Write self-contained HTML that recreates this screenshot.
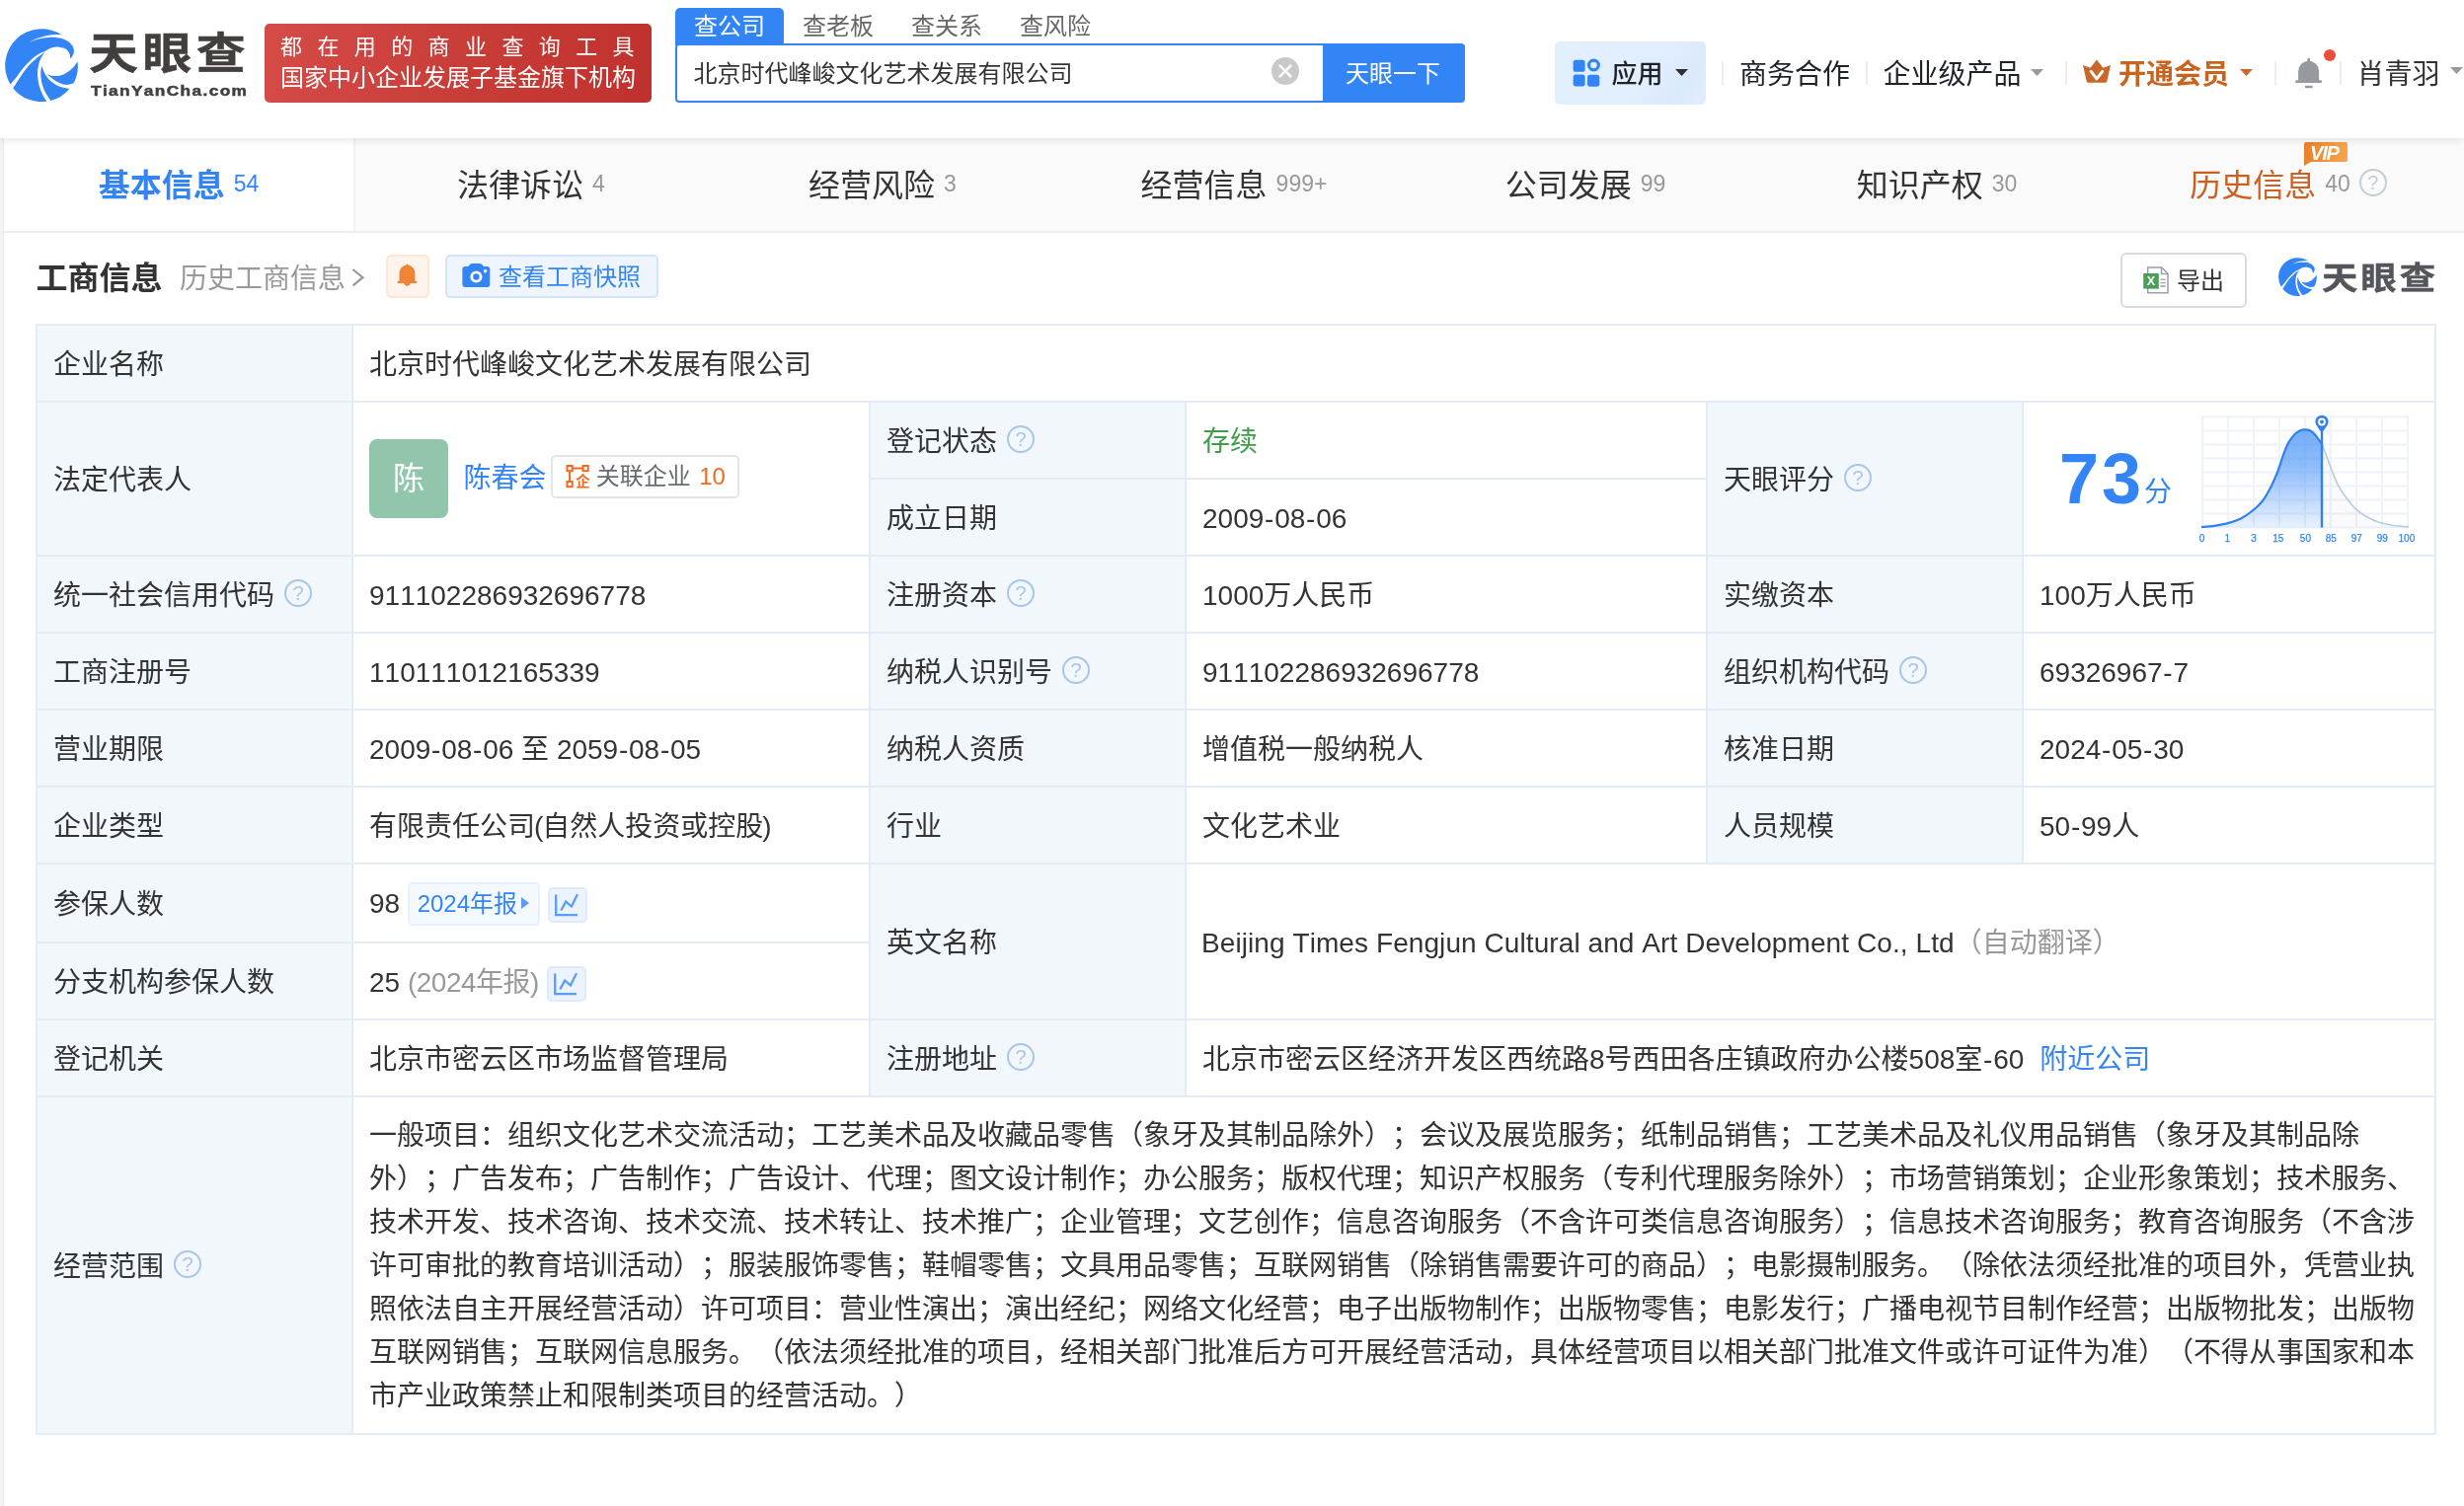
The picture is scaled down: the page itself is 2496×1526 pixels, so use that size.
<!DOCTYPE html><html lang="zh-CN"><head><meta charset="utf-8"><title>天眼查</title><style>
*{box-sizing:border-box;margin:0;padding:0}
html,body{width:2496px;height:1526px;overflow:hidden;background:#fff}
body{font-family:"Liberation Sans","Noto Sans CJK SC",sans-serif;color:#333;position:relative;font-size:28px;text-spacing-trim:space-all;font-kerning:none;-webkit-font-smoothing:antialiased}
#hdr,#tabs,#main{will-change:transform}
.t{position:absolute;white-space:nowrap}
.abs{position:absolute}
#hdr{position:absolute;left:0;top:0;width:2496px;height:140px;background:#fff;z-index:5;box-shadow:0 2px 8px rgba(0,0,0,0.10)}
#tabs{position:absolute;left:0;top:140px;width:2496px;height:96px;background:#fafafa;border-bottom:2px solid #eeeeee}
#gut{position:absolute;left:0;top:140px;width:4px;height:1386px;background:#f3f3f3;border-right:1px solid #e9e9e9}
.tab{position:absolute;top:0;height:94px;width:356px;text-align:center;line-height:97px;font-size:32px;color:#333;white-space:nowrap}
.tab .n{font-size:23px;color:#999;margin-left:9px;position:relative;top:-5px}
.tab.on{background:#fff;color:#3385f6;font-weight:bold;border-right:2px solid #f1f1f1;height:94px}
.tab.on .n{color:#3385f6;font-weight:normal}
.q{display:inline-block;border-radius:50%;text-align:center;font-size:20px;line-height:24px;font-family:"Liberation Sans",sans-serif;vertical-align:middle;font-weight:normal}
.sep{position:absolute;top:62px;width:2px;height:24px;background:#e9eef5}
table{position:absolute;left:36px;top:328px;width:2432px;border-collapse:collapse;table-layout:fixed;font-size:28px;color:#333}
td{border:2px solid #e3ecf5;padding:4px 16px 0;vertical-align:middle;height:78px;line-height:44px;white-space:nowrap;overflow:hidden}
td.l{background:#f2f7fc}
td .q{margin-left:10px;position:relative;top:-4.5px}
.hy{font-style:normal;margin:0 0.78px}
.pl{font-style:normal;margin:0 -1px 0 -1px}.pr{font-style:normal;margin:0 -1px}
.green{color:#3f9d4b}
.gray{color:#999}
.blue{color:#3385f6}
</style></head><body>
<div id="hdr">
<svg style="position:absolute;left:4.9px;top:28.9px" width="74.2" height="74.2" viewBox="80 145 1215 1215" fill="#3385f6" ><path d="M169,1069 A607.5,607.5 0 0 1 1025.0,250.0 C1004.2,248.8 944.2,241.0 900.0,243.0 C855.8,245.0 806.7,251.7 760.0,262.0 C713.3,272.3 666.7,287.0 620.0,305.0 C573.3,323.0 503.3,359.2 480.0,370.0 C506.7,364.7 586.7,331.7 640.0,318.0 C693.3,304.3 748.3,295.7 800.0,292.0 C851.7,288.3 906.7,291.0 950.0,296.0 C993.3,301.0 1026.7,308.8 1060.0,322.0 C1093.3,335.2 1125.8,355.3 1150.0,375.0 C1174.2,394.7 1192.5,415.8 1205.0,440.0 C1217.5,464.2 1225.0,495.0 1225.0,520.0 C1225.0,545.0 1215.0,569.2 1205.0,590.0 C1195.0,610.8 1171.7,635.8 1165.0,645.0 C1163.3,632.5 1162.5,592.5 1155.0,570.0 C1147.5,547.5 1135.8,526.7 1120.0,510.0 C1104.2,493.3 1083.3,479.7 1060.0,470.0 C1036.7,460.3 1006.7,455.0 980.0,452.0 C953.3,449.0 926.7,448.2 900.0,452.0 C873.3,455.8 846.3,463.3 820.0,475.0 C793.7,486.7 755.0,514.2 742.0,522.0 C725.0,529.2 673.7,545.3 640.0,565.0 C606.3,584.7 580.0,604.2 540.0,640.0 C500.0,675.8 445.0,728.3 400.0,780.0 C355.0,831.7 308.5,901.8 270.0,950.0 C231.5,998.2 185.8,1049.2 169.0,1069.0Z"/><path d="M746,532 C721.7,550.0 651.0,595.3 600.0,640.0 C549.0,684.7 490.0,740.0 440.0,800.0 C390.0,860.0 337.5,944.2 300.0,1000.0 C262.5,1055.8 229.2,1112.5 215.0,1135.0 A607.5,607.5 0 0 0 770.0,1353.0 C758.3,1332.5 720.0,1272.2 700.0,1230.0 C680.0,1187.8 662.5,1145.0 650.0,1100.0 C637.5,1055.0 629.7,1000.0 625.0,960.0 C620.3,920.0 619.5,896.7 622.0,860.0 C624.5,823.3 630.3,778.3 640.0,740.0 C649.7,701.7 662.3,664.7 680.0,630.0 C697.7,595.3 735.0,548.3 746.0,532.0Z"/><path d="M692,760 C689.2,775.0 677.3,816.7 675.0,850.0 C672.7,883.3 673.8,921.7 678.0,960.0 C682.2,998.3 688.0,1040.0 700.0,1080.0 C712.0,1120.0 726.7,1156.7 750.0,1200.0 C773.3,1243.3 825.0,1316.7 840.0,1340.0 A607.5,607.5 0 0 0 1150.0,1143.0 C1133.3,1140.0 1083.3,1133.8 1050.0,1125.0 C1016.7,1116.2 981.7,1105.0 950.0,1090.0 C918.3,1075.0 886.7,1055.8 860.0,1035.0 C833.3,1014.2 811.7,992.5 790.0,965.0 C768.3,937.5 746.3,904.2 730.0,870.0 C713.7,835.8 698.3,778.3 692.0,760.0Z"/><path d="M780,900 C790.0,903.7 816.7,916.7 840.0,922.0 C863.3,927.3 893.3,932.0 920.0,932.0 C946.7,932.0 973.3,929.0 1000.0,922.0 C1026.7,915.0 1053.3,904.5 1080.0,890.0 C1106.7,875.5 1135.0,855.0 1160.0,835.0 C1185.0,815.0 1209.2,794.2 1230.0,770.0 C1250.8,745.8 1275.8,703.3 1285.0,690.0 A607.5,607.5 0 0 1 1220.0,1050.0 C1205.0,1054.2 1158.3,1071.7 1130.0,1075.0 C1101.7,1078.3 1078.3,1076.7 1050.0,1070.0 C1021.7,1063.3 988.3,1049.2 960.0,1035.0 C931.7,1020.8 910.0,1007.5 880.0,985.0 C850.0,962.5 796.7,914.2 780.0,900.0Z"/></svg>
<div class="t " style="left:90px;top:27px;line-height:56px;font-size:44px;font-weight:bold;color:#433f3e;-webkit-text-stroke:0.5px #433f3e;transform-origin:0 50%;transform:scaleX(1.135);letter-spacing:3.9px">天眼查</div>
<div class="t " style="left:92px;top:83px;line-height:18px;font-size:15px;font-weight:bold;color:#433f3e;-webkit-text-stroke:0.5px #433f3e;transform-origin:0 50%;transform:scaleX(1.15);letter-spacing:1.2px;font-family:"Liberation Sans",sans-serif">TianYanCha.com</div>
<div class="abs" style="left:268px;top:24px;width:392px;height:80px;border-radius:5px;background:linear-gradient(100deg,#d54b47 0%,#c83c37 55%,#bf312c 100%)"></div>
<div class="t " style="left:284px;top:33px;line-height:30px;font-size:22px;color:#fff;letter-spacing:15.4px">都在用的商业查询工具</div>
<div class="t " style="left:284px;top:64px;line-height:30px;font-size:24px;color:#fff">国家中小企业发展子基金旗下机构</div>
<div class="abs" style="left:684px;top:8px;width:110px;height:38px;border-radius:5px 5px 0 0;background:#3385f6"></div>
<div class="t " style="left:684px;top:9px;line-height:36px;font-size:24px;width:110px;text-align:center;color:#fff">查公司</div>
<div class="t " style="left:794px;top:9px;line-height:36px;font-size:24px;width:110px;text-align:center;color:#666">查老板</div>
<div class="t " style="left:904px;top:9px;line-height:36px;font-size:24px;width:110px;text-align:center;color:#666">查关系</div>
<div class="t " style="left:1014px;top:9px;line-height:36px;font-size:24px;width:110px;text-align:center;color:#666">查风险</div>
<div class="abs" style="left:684px;top:44px;width:660px;height:60px;border:2px solid #3385f6;border-radius:4px 0 0 4px;background:#fff"></div>
<div class="t " style="left:702.5px;top:53px;line-height:44px;font-size:24px;color:#333">北京时代峰峻文化艺术发展有限公司</div>
<svg class="abs" style="left:1288px;top:58px" width="28" height="28" viewBox="0 0 28 28"><circle cx="14" cy="14" r="14" fill="#c9c9c9"/><path d="M8.6,8.6L19.4,19.4M19.4,8.6L8.6,19.4" stroke="#fff" stroke-width="2.6" stroke-linecap="round"/></svg>
<div class="abs" style="left:1340px;top:44px;width:144px;height:60px;border-radius:0 4px 4px 0;background:#3385f6"></div>
<div class="t " style="left:1339px;top:52.5px;line-height:44px;font-size:24px;color:#fff;width:144px;text-align:center">天眼一下</div>
<div class="abs" style="left:1575px;top:42px;width:153px;height:64px;border-radius:5px;background:linear-gradient(125deg,#e2effd 0%,#e1eefd 60%,#dbe9fc 82%,#e2eefd 100%)"></div>
<svg class="abs" style="left:1593px;top:59px" width="29" height="30" viewBox="0 0 29 30" fill="#3385f6"><rect x="0.6" y="1.8" width="12" height="12" rx="2.6"/><rect x="0.6" y="16.4" width="12" height="12" rx="2.6"/><rect x="15" y="16.7" width="12.3" height="12" rx="2.6"/><circle cx="21.4" cy="7" r="4.9" fill="none" stroke="#3385f6" stroke-width="3.2"/></svg>
<div class="t " style="left:1632.5px;top:53px;line-height:44px;font-size:26px;color:#1f2329;font-weight:500">应用</div>
<svg class="abs" style="left:1697px;top:70px" width="13" height="7" viewBox="0 0 13 7"><path d="M0,0H13L6.5,7Z" fill="#2b2e33"/></svg>
<div class="sep" style="left:1744px"></div>
<div class="t " style="left:1762px;top:53.5px;line-height:44px;font-size:28px;color:#1f2329">商务合作</div>
<div class="sep" style="left:1890px"></div>
<div class="t " style="left:1907.5px;top:53.5px;line-height:44px;font-size:28px;color:#1f2329">企业级产品</div>
<svg class="abs" style="left:2057px;top:70px" width="13" height="7" viewBox="0 0 13 7"><path d="M0,0H13L6.5,7Z" fill="#9a9a9a"/></svg>
<div class="sep" style="left:2092px"></div>
<svg class="abs" style="left:2108px;top:58px" width="32" height="28" viewBox="2108 58 32 28"><path d="M2110,66L2117.5,68.7L2123.9,60.5L2130.4,68.7L2138,66L2134.3,82.6Q2134,83.8 2132.8,83.8H2115.2Q2114,83.8 2113.7,82.6Z" fill="#cb6828"/><path d="M2118.2,72.3L2123.9,79.8L2129.7,72.3" fill="none" stroke="#fff" stroke-width="3" stroke-linecap="round" stroke-linejoin="round"/></svg>
<div class="t " style="left:2146px;top:53.5px;line-height:44px;font-size:28px;color:#c8641f;font-weight:bold">开通会员</div>
<svg class="abs" style="left:2269px;top:70px" width="13" height="7" viewBox="0 0 13 7"><path d="M0,0H13L6.5,7Z" fill="#cb6828"/></svg>
<div class="sep" style="left:2304px"></div>
<svg class="abs" style="left:2324px;top:48px" width="44" height="44" viewBox="2324 48 44 44"><g fill="#969a9e"><rect x="2337.3" y="58.9" width="2.7" height="4" rx="1"/><path d="M2328.1,82V72.2A10.5,10.5 0 0 1 2349.1,72.2V82Z"/><rect x="2325.3" y="81.2" width="26.6" height="2.7" rx="0.6"/><rect x="2334.9" y="86.8" width="7.8" height="2.4" rx="0.6"/></g><circle cx="2360" cy="55.9" r="6" fill="#ec4d3d"/></svg>
<div class="sep" style="left:2370px"></div>
<div class="t " style="left:2387.5px;top:53.5px;line-height:44px;font-size:28px;color:#333">肖青羽</div>
<svg class="abs" style="left:2482px;top:68px" width="13" height="7" viewBox="0 0 13 7"><path d="M0,0H13L6.5,7Z" fill="#9a9a9a"/></svg>
</div>
<div id="tabs">
<div class="tab on" style="left:4px">基本信息<span class="n">54</span></div>
<div class="tab" style="left:360px">法律诉讼<span class="n">4</span></div>
<div class="tab" style="left:716px">经营风险<span class="n">3</span></div>
<div class="tab" style="left:1072px">经营信息<span class="n">999+</span></div>
<div class="tab" style="left:1428px">公司发展<span class="n">99</span></div>
<div class="tab" style="left:1784px">知识产权<span class="n">30</span></div>
<div class="tab" style="left:2140px;color:#cc5f21">历史信息<span class="n">40</span><span class="q" style="width:28px;height:28px;border:2px solid #c5ced4;color:#c5ced4;margin-left:9px;position:relative;top:-5.5px">?</span></div>
<svg class="abs" style="left:2334px;top:3px" width="46" height="26" viewBox="0 0 46 26"><defs><linearGradient id="vg" x1="0" y1="0" x2="1" y2="0"><stop offset="0" stop-color="#e8812a"/><stop offset="1" stop-color="#f6a54e"/></linearGradient></defs><path d="M0,3Q0,1 2,1H42Q44,1 44,3V19Q44,21 42,21H7L0,25Z" fill="url(#vg)"/><text x="6" y="18.6" font-family="Liberation Sans,sans-serif" font-weight="bold" font-style="italic" font-size="20" fill="#fff" letter-spacing="-1.2">VIP</text></svg>
</div>
<div id="gut"></div><div id="main">
<div class="t " style="left:36.5px;top:260px;line-height:44px;font-size:32px;font-weight:bold;color:#333">工商信息</div>
<div class="t " style="left:182px;top:260.5px;line-height:44px;font-size:28px;color:#999">历史工商信息</div>
<svg class="abs" style="left:354px;top:270px" width="18" height="22" viewBox="354 270 18 22"><path d="M357.5,273L367.5,281.2L357.5,289.4" fill="none" stroke="#999" stroke-width="2.2"/></svg>
<div class="abs" style="left:391px;top:258px;width:44px;height:44px;border:2px solid #fde6d3;border-radius:5px;background:#fef4ec"></div>
<svg class="abs" style="left:400px;top:264px" width="26" height="30" viewBox="400 264 26 30" fill="#ee8535"><path d="M412.45,267.2L413.6,268.4Q420.4,270 420.4,278V285H404.5V278Q404.5,270 411.3,268.4Z"/><rect x="402.7" y="284.7" width="19.5" height="2.4" rx="0.5"/><path d="M409,287H415.9Q414.6,290 412.45,290Q410.3,290 409,287Z"/></svg>
<div class="abs" style="left:451px;top:258px;width:216px;height:44px;border:2px solid #d1e4fc;border-radius:5px;background:#eef5fe"></div>
<svg class="abs" style="left:466px;top:264px" width="34" height="30" viewBox="466 264 34 30"><path d="M468.4,273Q468.4,270 471.4,270H474.2L476.6,267.6Q477.3,266.9 478.3,266.9H486Q487,266.9 487.7,267.6L490.1,270H493.3Q496.3,270 496.3,273V288Q496.3,291 493.3,291H471.4Q468.4,291 468.4,288Z" fill="#3385f6"/><circle cx="482.4" cy="280.5" r="4.65" fill="none" stroke="#fff" stroke-width="2.9"/><circle cx="491.6" cy="274.8" r="1.8" fill="#fff"/></svg>
<div class="t " style="left:505px;top:259px;line-height:44px;font-size:24px;color:#3385f6">查看工商快照</div>
<div class="abs" style="left:2148px;top:256px;width:128px;height:56px;border:2px solid #dadada;border-radius:6px;background:#fff"></div>
<svg class="abs" style="left:2168px;top:268px" width="32" height="32" viewBox="2168 268 32 32"><path d="M2175.7,271H2189.8L2196,277.2V296.8H2175.7Z" fill="#fff" stroke="#9ba0a6" stroke-width="1.5"/><path d="M2189.5,271V277.5H2196" fill="none" stroke="#9ba0a6" stroke-width="1.5"/><path d="M2188.4,283.1H2193.7M2188.4,286.6H2193.7M2188.4,290H2193.7" stroke="#9ba0a6" stroke-width="1.4"/><rect x="2171.2" y="277" width="15.6" height="15.6" fill="#4a9f57"/><text x="2179" y="289.3" text-anchor="middle" font-family="Liberation Sans,sans-serif" font-weight="bold" font-size="12.5" fill="#fff">X</text></svg>
<div class="t " style="left:2205px;top:262.5px;line-height:44px;font-size:24px;color:#333">导出</div>
<svg style="position:absolute;left:2308px;top:261px" width="39" height="39" viewBox="80 145 1215 1215" fill="#3385f6" ><path d="M169,1069 A607.5,607.5 0 0 1 1025.0,250.0 C1004.2,248.8 944.2,241.0 900.0,243.0 C855.8,245.0 806.7,251.7 760.0,262.0 C713.3,272.3 666.7,287.0 620.0,305.0 C573.3,323.0 503.3,359.2 480.0,370.0 C506.7,364.7 586.7,331.7 640.0,318.0 C693.3,304.3 748.3,295.7 800.0,292.0 C851.7,288.3 906.7,291.0 950.0,296.0 C993.3,301.0 1026.7,308.8 1060.0,322.0 C1093.3,335.2 1125.8,355.3 1150.0,375.0 C1174.2,394.7 1192.5,415.8 1205.0,440.0 C1217.5,464.2 1225.0,495.0 1225.0,520.0 C1225.0,545.0 1215.0,569.2 1205.0,590.0 C1195.0,610.8 1171.7,635.8 1165.0,645.0 C1163.3,632.5 1162.5,592.5 1155.0,570.0 C1147.5,547.5 1135.8,526.7 1120.0,510.0 C1104.2,493.3 1083.3,479.7 1060.0,470.0 C1036.7,460.3 1006.7,455.0 980.0,452.0 C953.3,449.0 926.7,448.2 900.0,452.0 C873.3,455.8 846.3,463.3 820.0,475.0 C793.7,486.7 755.0,514.2 742.0,522.0 C725.0,529.2 673.7,545.3 640.0,565.0 C606.3,584.7 580.0,604.2 540.0,640.0 C500.0,675.8 445.0,728.3 400.0,780.0 C355.0,831.7 308.5,901.8 270.0,950.0 C231.5,998.2 185.8,1049.2 169.0,1069.0Z"/><path d="M746,532 C721.7,550.0 651.0,595.3 600.0,640.0 C549.0,684.7 490.0,740.0 440.0,800.0 C390.0,860.0 337.5,944.2 300.0,1000.0 C262.5,1055.8 229.2,1112.5 215.0,1135.0 A607.5,607.5 0 0 0 770.0,1353.0 C758.3,1332.5 720.0,1272.2 700.0,1230.0 C680.0,1187.8 662.5,1145.0 650.0,1100.0 C637.5,1055.0 629.7,1000.0 625.0,960.0 C620.3,920.0 619.5,896.7 622.0,860.0 C624.5,823.3 630.3,778.3 640.0,740.0 C649.7,701.7 662.3,664.7 680.0,630.0 C697.7,595.3 735.0,548.3 746.0,532.0Z"/><path d="M692,760 C689.2,775.0 677.3,816.7 675.0,850.0 C672.7,883.3 673.8,921.7 678.0,960.0 C682.2,998.3 688.0,1040.0 700.0,1080.0 C712.0,1120.0 726.7,1156.7 750.0,1200.0 C773.3,1243.3 825.0,1316.7 840.0,1340.0 A607.5,607.5 0 0 0 1150.0,1143.0 C1133.3,1140.0 1083.3,1133.8 1050.0,1125.0 C1016.7,1116.2 981.7,1105.0 950.0,1090.0 C918.3,1075.0 886.7,1055.8 860.0,1035.0 C833.3,1014.2 811.7,992.5 790.0,965.0 C768.3,937.5 746.3,904.2 730.0,870.0 C713.7,835.8 698.3,778.3 692.0,760.0Z"/><path d="M780,900 C790.0,903.7 816.7,916.7 840.0,922.0 C863.3,927.3 893.3,932.0 920.0,932.0 C946.7,932.0 973.3,929.0 1000.0,922.0 C1026.7,915.0 1053.3,904.5 1080.0,890.0 C1106.7,875.5 1135.0,855.0 1160.0,835.0 C1185.0,815.0 1209.2,794.2 1230.0,770.0 C1250.8,745.8 1275.8,703.3 1285.0,690.0 A607.5,607.5 0 0 1 1220.0,1050.0 C1205.0,1054.2 1158.3,1071.7 1130.0,1075.0 C1101.7,1078.3 1078.3,1076.7 1050.0,1070.0 C1021.7,1063.3 988.3,1049.2 960.0,1035.0 C931.7,1020.8 910.0,1007.5 880.0,985.0 C850.0,962.5 796.7,914.2 780.0,900.0Z"/></svg>
<div class="t " style="left:2351.5px;top:259.5px;line-height:44px;font-size:32px;font-weight:bold;color:#54565b;-webkit-text-stroke:0.4px #54565b;transform-origin:0 50%;transform:scaleX(1.14);letter-spacing:2.5px">天眼查</div>
<style>.cb{display:inline-block;width:40px;height:36px;border:2px solid #deebfd;border-radius:5px;background:#eaf3fe;vertical-align:middle;margin-left:7.7px;position:relative;top:-1px;line-height:0}.yb{display:inline-block;height:44px;line-height:40px;border:2px solid #e6f0fe;border-radius:5px;background:#f4f8ff;color:#3385f6;font-size:24px;padding:0 9px 0 7.5px;vertical-align:middle;margin-left:8px;position:relative;top:-2px}.yb i{display:inline-block;width:0;height:0;border-left:8px solid #5a9cf8;border-top:6px solid transparent;border-bottom:6px solid transparent;margin-left:4px;position:relative;top:-3px}.av{display:inline-block;width:80px;height:80px;border-radius:8px;background:#91c6ad;color:#fff;font-size:32px;line-height:80px;text-align:center;vertical-align:middle}.rb{display:inline-block;height:44px;line-height:40px;border:2px solid #e1e6eb;border-radius:5px;font-size:24px;color:#666c72;padding:0 12px 0 11px;vertical-align:middle;margin-left:4.5px;position:relative;top:-2.5px}.rb b{font-weight:normal;color:#ee6a1f;margin-left:8.5px}</style>
<table><colgroup><col style="width:320px"><col style="width:524px"><col style="width:320px"><col style="width:528px"><col style="width:320px"><col style="width:418px"></colgroup>
<tr><td class="l">企业名称</td><td colspan="5">北京时代峰峻文化艺术发展有限公司</td></tr>
<tr><td class="l" rowspan="2">法定代表人</td><td rowspan="2" style="padding-top:0"><span class="av">陈</span><span class="blue" style="margin-left:15.5px;vertical-align:middle;position:relative;top:0px">陈春会</span><span class="rb"><svg width="26" height="26" viewBox="571.5 470 26 26" style="vertical-align:middle;position:relative;top:-2px"><g fill="none" stroke="#ee6a1f" stroke-width="2"><rect x="575" y="473" width="5.2" height="5.2"/><rect x="591" y="473" width="5.2" height="5.2"/><rect x="575" y="489" width="5.2" height="5.2"/><path d="M580.2,475.6H591M577.6,478.2V489"/></g><text x="591" y="494.3" text-anchor="middle" font-family="Liberation Sans,Noto Sans CJK SC,sans-serif" font-weight="bold" font-size="14.5" fill="#ee6a1f">企</text></svg> 关联企业<b>10</b></span></td><td class="l">登记状态<span class="q" style="width:28px;height:28px;border:2px solid #a9c6e8;color:#a9c6e8;">?</span></td><td class="green">存续</td><td class="l" rowspan="2">天眼评分<span class="q" style="width:28px;height:28px;border:2px solid #a9c6e8;color:#a9c6e8;">?</span></td><td rowspan="2" style="padding:0;position:relative"><span class="abs" style="left:36px;top:32px;font-size:72px;line-height:90px;letter-spacing:3px;font-weight:bold;color:#3385f6;font-family:'Liberation Sans',sans-serif">73</span><span class="abs blue" style="left:122px;top:69px;font-size:28px;line-height:44px">分</span></td></tr>
<tr><td class="l">成立日期</td><td>2009<i class="hy">-</i>08<i class="hy">-</i>06</td></tr>
<tr><td class="l">统一社会信用代码<span class="q" style="width:28px;height:28px;border:2px solid #a9c6e8;color:#a9c6e8;">?</span></td><td>911102286932696778</td><td class="l">注册资本<span class="q" style="width:28px;height:28px;border:2px solid #a9c6e8;color:#a9c6e8;">?</span></td><td>1000万人民币</td><td class="l">实缴资本</td><td>100万人民币</td></tr>
<tr><td class="l">工商注册号</td><td>110111012165339</td><td class="l">纳税人识别号<span class="q" style="width:28px;height:28px;border:2px solid #a9c6e8;color:#a9c6e8;">?</span></td><td>911102286932696778</td><td class="l">组织机构代码<span class="q" style="width:28px;height:28px;border:2px solid #a9c6e8;color:#a9c6e8;">?</span></td><td>69326967<i class="hy">-</i>7</td></tr>
<tr><td class="l">营业期限</td><td>2009<i class="hy">-</i>08<i class="hy">-</i>06 至 2059<i class="hy">-</i>08<i class="hy">-</i>05</td><td class="l">纳税人资质</td><td>增值税一般纳税人</td><td class="l">核准日期</td><td>2024<i class="hy">-</i>05<i class="hy">-</i>30</td></tr>
<tr><td class="l">企业类型</td><td>有限责任公司<i class="pl">(</i>自然人投资或控股<i class="pr">)</i></td><td class="l">行业</td><td>文化艺术业</td><td class="l">人员规模</td><td>50<i class="hy">-</i>99人</td></tr>
<tr><td class="l" style="height:80px">参保人数</td><td>98<span class="yb">2024年报<i></i></span><span class="cb"><svg width="36" height="32" viewBox="0 0 36 32"><path d="M6.2,5.5V26.2H28" fill="none" stroke="#5a9cf8" stroke-width="2.3"/><path d="M11.3,21.5L16.2,12.6L21.9,17.5L28,5.3" fill="none" stroke="#5a9cf8" stroke-width="2.3"/></svg></span></td><td class="l" rowspan="2">英文名称</td><td rowspan="2" colspan="3"><span style="letter-spacing:0.08px;margin-left:-1px">Beijing Times Fengjun Cultural and Art Development Co., Ltd</span><span class="gray">（自动翻译）</span></td></tr>
<tr><td class="l">分支机构参保人数</td><td>25 <span class="gray" style="letter-spacing:-0.5px">(2024年报)</span><span class="cb"><svg width="36" height="32" viewBox="0 0 36 32"><path d="M6.2,5.5V26.2H28" fill="none" stroke="#5a9cf8" stroke-width="2.3"/><path d="M11.3,21.5L16.2,12.6L21.9,17.5L28,5.3" fill="none" stroke="#5a9cf8" stroke-width="2.3"/></svg></span></td></tr>
<tr><td class="l">登记机关</td><td>北京市密云区市场监督管理局</td><td class="l">注册地址<span class="q" style="width:28px;height:28px;border:2px solid #a9c6e8;color:#a9c6e8;">?</span></td><td colspan="3">北京市密云区经济开发区西统路8号西田各庄镇政府办公楼508室<i class="hy">-</i>60<span class="blue" style="margin-left:16px">附近公司</span></td></tr>
<tr><td class="l" style="height:342px">经营范围<span class="q" style="width:28px;height:28px;border:2px solid #a9c6e8;color:#a9c6e8;">?</span></td><td colspan="5" style="white-space:normal;padding:17px 16px 15px 16px;line-height:44px;word-break:break-all">一般项目：组织文化艺术交流活动；工艺美术品及收藏品零售（象牙及其制品除外）；会议及展览服务；纸制品销售；工艺美术品及礼仪用品销售（象牙及其制品除外）；广告发布；广告制作；广告设计、代理；图文设计制作；办公服务；版权代理；知识产权服务（专利代理服务除外）；市场营销策划；企业形象策划；技术服务、技术开发、技术咨询、技术交流、技术转让、技术推广；企业管理；文艺创作；信息咨询服务（不含许可类信息咨询服务）；信息技术咨询服务；教育咨询服务（不含涉许可审批的教育培训活动）；服装服饰零售；鞋帽零售；文具用品零售；互联网销售（除销售需要许可的商品）；电影摄制服务。（除依法须经批准的项目外，凭营业执照依法自主开展经营活动）许可项目：营业性演出；演出经纪；网络文化经营；电子出版物制作；出版物零售；电影发行；广播电视节目制作经营；出版物批发；出版物互联网销售；互联网信息服务。（依法须经批准的项目，经相关部门批准后方可开展经营活动，具体经营项目以相关部门批准文件或许可证件为准）（不得从事国家和本市产业政策禁止和限制类项目的经营活动。）</td></tr>
</table>
<svg class="abs" style="left:2225px;top:418px" width="230" height="136" viewBox="-5 -3.5 230 136"><defs><linearGradient id="cg" x1="0" y1="0" x2="0" y2="1"><stop offset="0" stop-color="#3f8df7" stop-opacity="0.72"/><stop offset="0.35" stop-color="#3f8df7" stop-opacity="0.6"/><stop offset="1" stop-color="#3f8df7" stop-opacity="0.12"/></linearGradient></defs><g stroke="#eef3fa" stroke-width="2" fill="none"><path d="M1.0,0V113.5"/><path d="M27.0,0V113.5"/><path d="M53.0,0V113.5"/><path d="M79.0,0V113.5"/><path d="M105.0,0V113.5"/><path d="M131.0,0V113.5"/><path d="M157.0,0V113.5"/><path d="M183.0,0V113.5"/><path d="M209.0,0V113.5"/><path d="M0,1.0H210"/><path d="M0,15.0H210"/><path d="M0,29.0H210"/><path d="M0,43.0H210"/><path d="M0,57.0H210"/><path d="M0,71.0H210"/><path d="M0,85.0H210"/><path d="M0,99.0H210"/><path d="M0,113.0H210"/></g><path d="M122.0,28.4 C122.9,30.7 125.8,37.6 127.5,42.3 C129.2,46.9 130.8,52.0 132.5,56.3 C134.2,60.6 135.7,64.5 137.5,68.2 C139.3,71.9 141.4,75.2 143.4,78.2 C145.4,81.2 147.1,83.4 149.4,86.2 C151.7,89.0 154.4,92.5 157.4,95.1 C160.4,97.7 163.7,99.9 167.3,102.0 C171.0,104.1 174.8,106.1 179.3,107.6 C183.8,109.1 189.1,110.2 194.2,111.0 C199.3,111.8 207.4,112.2 210.0,112.5 L210,113 L122,113Z" fill="rgba(120,120,120,0.04)"/><path d="M0.0,112.5 C2.2,112.3 8.5,112.0 13.0,111.3 C17.5,110.6 22.4,109.8 26.9,108.6 C31.4,107.4 35.6,106.1 39.8,104.0 C43.9,101.9 48.1,99.0 51.8,96.0 C55.5,93.0 58.8,90.0 61.8,86.2 C64.8,82.4 67.4,77.5 69.7,73.2 C72.0,68.9 74.0,64.3 75.7,60.3 C77.4,56.3 78.4,53.1 79.7,49.3 C81.0,45.5 82.2,41.2 83.7,37.4 C85.2,33.6 86.8,29.6 88.6,26.4 C90.4,23.2 92.8,20.3 94.6,18.4 C96.4,16.5 97.9,15.7 99.6,14.9 C101.3,14.2 102.9,14.0 104.6,13.9 C106.3,13.8 107.8,13.7 109.6,14.6 C111.4,15.5 113.4,17.1 115.5,19.4 C117.6,21.7 120.9,26.9 122.0,28.4 L122,113 L0,113Z" fill="url(#cg)"/><path d="M122.0,28.4 C122.9,30.7 125.8,37.6 127.5,42.3 C129.2,46.9 130.8,52.0 132.5,56.3 C134.2,60.6 135.7,64.5 137.5,68.2 C139.3,71.9 141.4,75.2 143.4,78.2 C145.4,81.2 147.1,83.4 149.4,86.2 C151.7,89.0 154.4,92.5 157.4,95.1 C160.4,97.7 163.7,99.9 167.3,102.0 C171.0,104.1 174.8,106.1 179.3,107.6 C183.8,109.1 189.1,110.2 194.2,111.0 C199.3,111.8 207.4,112.2 210.0,112.5" fill="none" stroke="#b9ccde" stroke-width="1.6"/><path d="M0.0,112.5 C2.2,112.3 8.5,112.0 13.0,111.3 C17.5,110.6 22.4,109.8 26.9,108.6 C31.4,107.4 35.6,106.1 39.8,104.0 C43.9,101.9 48.1,99.0 51.8,96.0 C55.5,93.0 58.8,90.0 61.8,86.2 C64.8,82.4 67.4,77.5 69.7,73.2 C72.0,68.9 74.0,64.3 75.7,60.3 C77.4,56.3 78.4,53.1 79.7,49.3 C81.0,45.5 82.2,41.2 83.7,37.4 C85.2,33.6 86.8,29.6 88.6,26.4 C90.4,23.2 92.8,20.3 94.6,18.4 C96.4,16.5 97.9,15.7 99.6,14.9 C101.3,14.2 102.9,14.0 104.6,13.9 C106.3,13.8 107.8,13.7 109.6,14.6 C111.4,15.5 113.4,17.1 115.5,19.4 C117.6,21.7 120.9,26.9 122.0,28.4" fill="none" stroke="#3080f3" stroke-width="2.2"/><path d="M122,113V16" stroke="#3080f3" stroke-width="2.4"/><path d="M122,17.6L116.4,9.3A6.6,6.6 0 1 1 127.6,9.3Z" fill="#3080f3"/><circle cx="122" cy="6" r="3.9" fill="#fff"/><circle cx="122" cy="6" r="1.9" fill="#3080f3"/><g font-family="Liberation Sans,sans-serif" font-size="10" fill="#3385f6" stroke="#3385f6" stroke-width="0.25"><text x="0.5" y="127.3" text-anchor="middle">0</text><text x="26.4" y="127.3" text-anchor="middle">1</text><text x="53.0" y="127.3" text-anchor="middle">3</text><text x="77.7" y="127.3" text-anchor="middle">15</text><text x="105.4" y="127.3" text-anchor="middle">50</text><text x="131.3" y="127.3" text-anchor="middle">85</text><text x="157.2" y="127.3" text-anchor="middle">97</text><text x="183.3" y="127.3" text-anchor="middle">99</text><text x="207.9" y="127.3" text-anchor="middle">100</text></g></svg>
</div></body></html>
